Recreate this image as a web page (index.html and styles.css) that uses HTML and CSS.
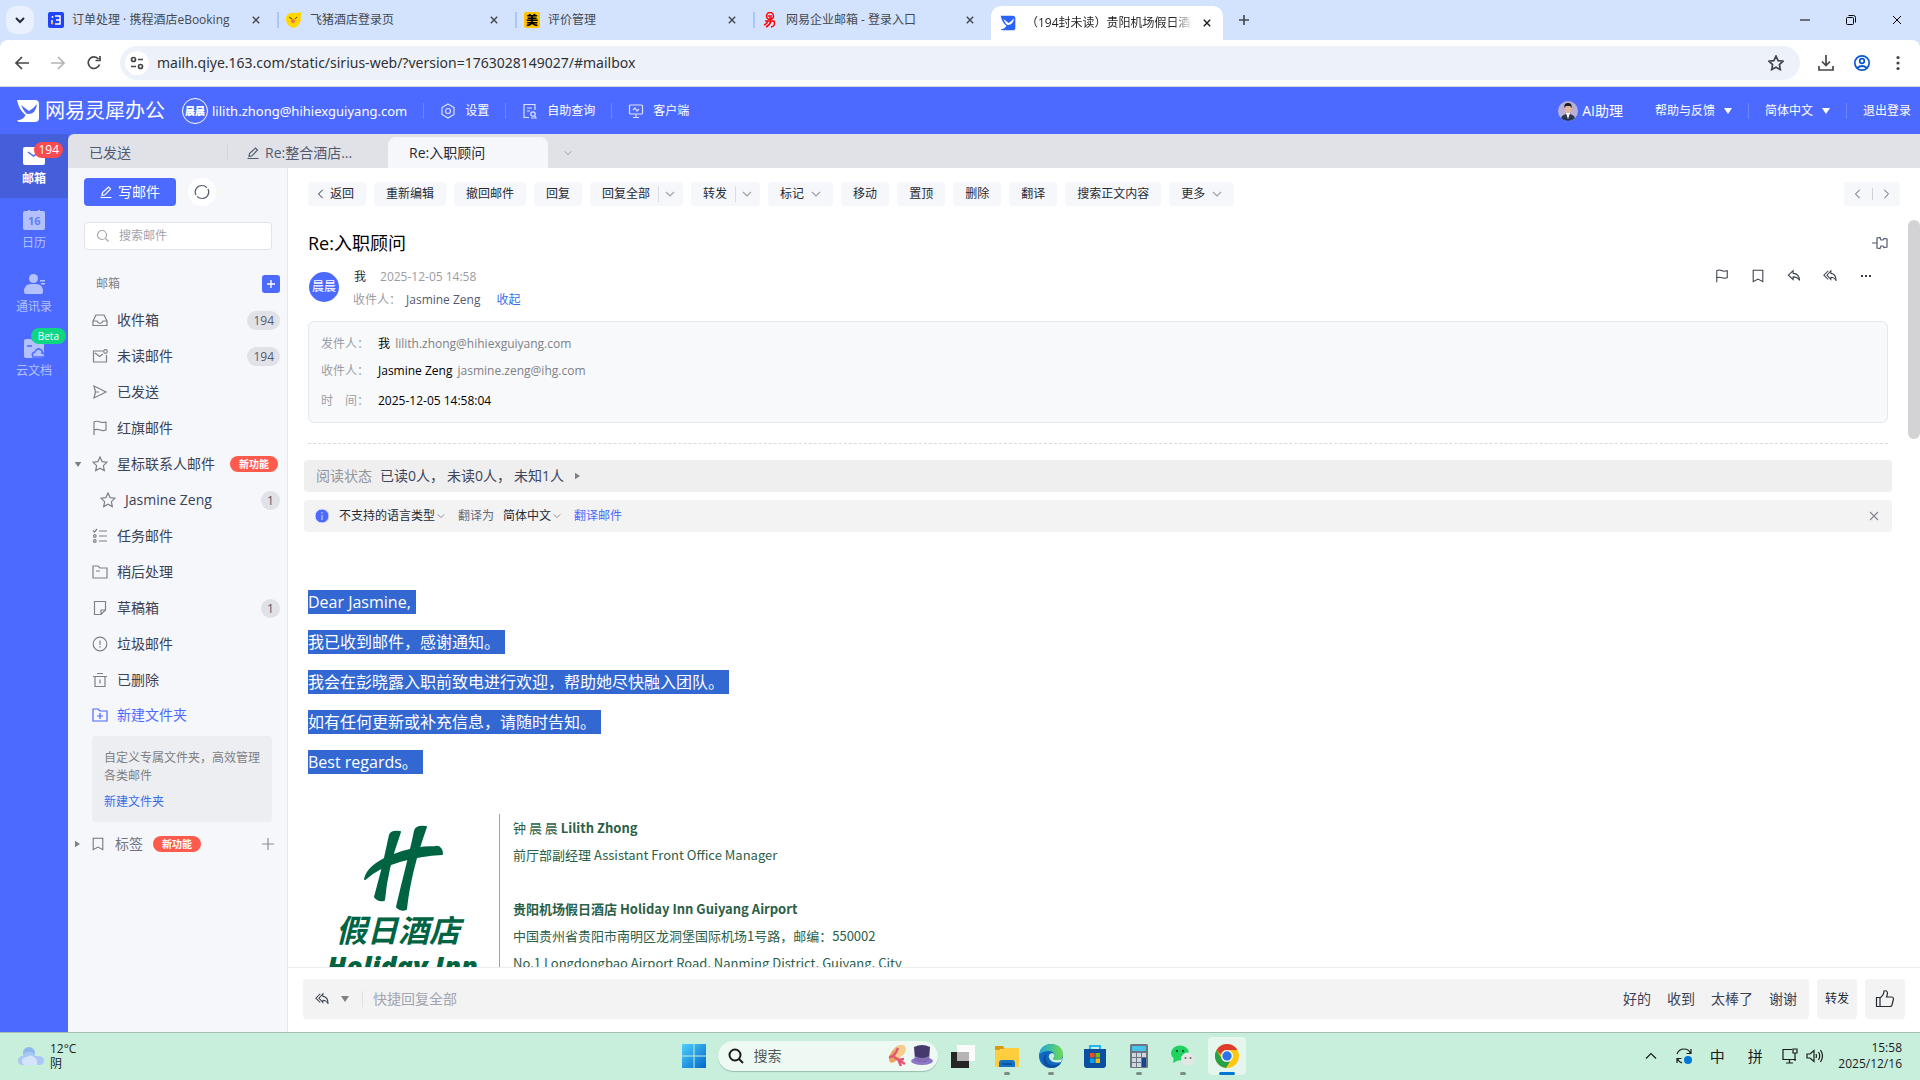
FILE: index.html
```html
<!DOCTYPE html>
<html lang="zh-CN">
<head>
  <meta charset="utf-8">
  <meta name="viewport" content="width=device-width">
  <title>(194封未读) 贵阳机场假日酒店</title>
  <link rel="stylesheet" href="styles.css">
</head>
<body>
  <!-- shared icons -->
  <svg class="sprite" aria-hidden="true">
    <symbol id="i-close" viewBox="0 0 10 10"><path d="M1 1l8 8M9 1L1 9"/></symbol>
    <symbol id="i-down" viewBox="0 0 10 10"><path d="M1 3l4 4 4-4"/></symbol>
    <symbol id="i-left" viewBox="0 0 10 12"><path d="M7 1L2 6l5 5"/></symbol>
    <symbol id="i-right" viewBox="0 0 10 12"><path d="M3 1l5 5-5 5"/></symbol>
    <symbol id="i-tri" viewBox="0 0 8 6"><path d="M0 0h8L4 6z"/></symbol>
    <symbol id="i-tri-r" viewBox="0 0 6 8"><path d="M0 0v8l6-4z"/></symbol>
    <symbol id="i-plus" viewBox="0 0 12 12"><path d="M6 0v12M0 6h12"/></symbol>
    <symbol id="i-edit" viewBox="0 0 12 12"><path d="M.5 11.500h11M2 9.500l.5-3L8.500 1l2 2L5 8.800z"/></symbol>
    <symbol id="i-flag" viewBox="0 0 16 16"><path d="M2 15V2c2-1 4-1 6 0s4 .5 6 0v8c-2 .7-4 .7-6 0s-4-.8-6 0"/></symbol>
    <symbol id="i-mark" viewBox="0 0 16 16"><path d="M2.500 1.500h11v13L8 11.500l-5.500 3z"/></symbol>
    <symbol id="i-star" viewBox="0 0 16 16"><path d="M8 1l2.100 4.600 4.900.6-3.600 3.400.9 5L8 12.200 3.700 14.600l.9-5L1 6.200l4.900-.6z"/></symbol>
    <symbol id="i-reply" viewBox="0 0 16 16"><path d="M7 2L1.500 7 7 12V9c3 0 5.500 1 7.500 4C14 8 11 5.200 7 5z"/></symbol>
    <symbol id="i-reply-all" viewBox="0 0 16 16"><path d="M9 2L4.500 7 9 12V9.500c3 0 4.500 1 6 4C15 8 12 5.300 9 5zM6 2L1 7l5 5"/></symbol>
    <symbol id="i-logo" viewBox="0 0 24 24"><path d="M1 1h18q4 0 4 4v14q0 4-4 4H4q-2 0-3-1.500 7-1 8.500-5.500Q3 11 1 1z"/><path class="cut" d="M5 6q4 3 8 6 5-3 8-7-1 10-9 10-3 0-7-9z"/></symbol>
  </svg>

  <header class="browser">
    <div class="tabstrip">
      <button class="tab-search" aria-label="搜索标签页"><svg class="ico s10 bold"><use href="#i-down"/></svg></button>
      <div class="tab">
        <svg class="fav" viewBox="0 0 16 16"><rect width="16" height="16" rx="2" fill="#2043ff"/><path d="M7 4h5v8H7M8 8h4M4 8v4" stroke="#fff" stroke-width="1.500" fill="none"/><circle cx="4.500" cy="5" r="1" fill="#fff"/><circle cx="4.500" cy="11.500" r="1" fill="#ff9d00"/></svg>
        <span>订单处理 · 携程酒店eBooking</span>
        <button aria-label="关闭"><svg class="ico s8"><use href="#i-close"/></svg></button>
      </div>
      <div class="tab">
        <svg class="fav" viewBox="0 0 16 16"><path d="M0 5Q3 0 8 1q3 0 8-1-2 3-1 8-2 7-8 8Q-1 13 0 5z" fill="#ffd800"/><path d="M3 5l3 2M11 5l-2 2" stroke="#553300"/><circle cx="7" cy="9" r="2" fill="#f56b63"/></svg>
        <span>飞猪酒店登录页</span>
        <button aria-label="关闭"><svg class="ico s8"><use href="#i-close"/></svg></button>
      </div>
      <div class="tab">
        <svg class="fav" viewBox="0 0 16 16"><rect width="16" height="16" rx="2" fill="#ffc300"/><text x="2" y="12.500" class="fav-text">美</text></svg>
        <span>评价管理</span>
        <button aria-label="关闭"><svg class="ico s8"><use href="#i-close"/></svg></button>
      </div>
      <div class="tab">
        <svg class="fav" viewBox="0 0 16 16"><g fill="none" stroke="#f00" stroke-width="1.500"><circle cx="8" cy="4" r="3.500"/><path d="M6 4h4M7 6h3M3 9h9q2 5-3 6M6 9q-1 3-4 4M9 9q-1 4-5 6"/></g></svg>
        <span>网易企业邮箱 - 登录入口</span>
        <button aria-label="关闭"><svg class="ico s8"><use href="#i-close"/></svg></button>
      </div>
      <div class="tab on">
        <svg class="fav brand"><use href="#i-logo"/></svg>
        <span>（194封未读）贵阳机场假日酒店</span>
        <button aria-label="关闭"><svg class="ico s8"><use href="#i-close"/></svg></button>
      </div>
      <button class="new-tab" aria-label="新标签页"><svg class="ico s10"><use href="#i-plus"/></svg></button>
      <div class="win">
        <button aria-label="最小化"><svg class="ico s10 thin" viewBox="0 0 10 10"><path d="M0 5h10"/></svg></button>
        <button aria-label="还原"><svg class="ico s10 thin" viewBox="0 0 10 10"><rect x=".5" y="2.500" width="7" height="7" rx="1"/><path d="M2.500.5h5q2 0 2 2v5"/></svg></button>
        <button aria-label="关闭窗口"><svg class="ico s10 thin"><use href="#i-close"/></svg></button>
      </div>
    </div>
    <div class="addressbar">
      <button aria-label="后退"><svg class="ico s16 nav" viewBox="0 0 16 16"><path d="M15 8H2M8 2L2 8l6 6"/></svg></button>
      <button aria-label="前进" disabled><svg class="ico s16 nav" viewBox="0 0 16 16"><path d="M1 8h13M8 2l6 6-6 6"/></svg></button>
      <button aria-label="重新加载"><svg class="ico s16 nav" viewBox="0 0 16 16"><path d="M13.500 9.500A5.800 5.800 0 1 1 12.500 4M14 1v4.500H9.500"/></svg></button>
      <div class="omnibox">
        <span class="site"><svg class="ico s14 nav" viewBox="0 0 14 14"><circle cx="3.500" cy="3.500" r="2"/><path d="M8 3.500h5M1 10.500h5"/><circle cx="10.500" cy="10.500" r="2"/></svg></span>
        <input type="text" aria-label="地址" value="mailh.qiye.163.com/static/sirius-web/?version=1763028149027/#mailbox">
        <button aria-label="收藏"><svg class="ico s16 nav"><use href="#i-star"/></svg></button>
      </div>
      <button aria-label="下载"><svg class="ico s16 nav" viewBox="0 0 16 16"><path d="M8 0v10M4 6.500l4 4 4-4M1 11v4h14v-4"/></svg></button>
      <button aria-label="个人资料"><svg class="ico s16 nav profile" viewBox="0 0 16 16"><circle cx="8" cy="8" r="7.200"/><circle cx="8" cy="6" r="2.300"/><path d="M3 13q5-4 10 0"/></svg></button>
      <button aria-label="菜单"><svg class="ico s16 dots" viewBox="0 0 16 16"><circle cx="8" cy="2.500" r="1.600"/><circle cx="8" cy="8" r="1.600"/><circle cx="8" cy="13.500" r="1.600"/></svg></button>
    </div>
  </header>

  <div class="topbar">
    <a class="logo" href="#"><svg class="logo-mark"><use href="#i-logo"/></svg><span>网易灵犀办公</span></a>
    <a class="account" href="#"><span class="account-pic">晨晨</span>lilith.zhong@hihiexguiyang.com</a>
    <a class="top-item" href="#"><svg class="ico s16" viewBox="0 0 16 16"><path d="M8 1l6 3.500v7L8 15l-6-3.500v-7z"/><circle cx="8" cy="8" r="2.500"/></svg>设置</a>
    <a class="top-item" href="#"><svg class="ico s16" viewBox="0 0 16 16"><path d="M13 7V1.500H2v13h5M5 5h5M5 8h3"/><circle cx="11" cy="11" r="2.200"/><path d="M9 15h5l-1-2"/></svg>自助查询</a>
    <a class="top-item" href="#"><svg class="ico s16" viewBox="0 0 16 16"><rect x="1.500" y="2" width="13" height="9" rx="1"/><path d="M5 14.500h6M8 11v3M5 7l2-2 2 3 2-2"/></svg>客户端</a>
    <div class="top-right">
      <a class="ai" href="#"><svg class="ai-pic" viewBox="0 0 20 20"><circle cx="10" cy="10" r="10" fill="#b9aed4"/><path d="M3 17q1-3 5-4h4q4 1 5 4-3 3-7 3t-7-3z" fill="#2c3850"/><path d="M8 12h4l-2 6z" fill="#fff"/><ellipse cx="10" cy="8" rx="3.200" ry="4.200" fill="#e3b79d"/><path d="M6.500 7q-1-5 3.500-5t3.500 5L12 5H8z" fill="#1d1d24"/></svg>AI助理</a>
      <button class="top-item">帮助与反馈<svg class="tri"><use href="#i-tri"/></svg></button>
      <button class="top-item">简体中文<svg class="tri"><use href="#i-tri"/></svg></button>
      <a class="top-item last" href="#">退出登录</a>
    </div>
  </div>

  <div class="app">
    <nav class="rail">
      <a class="rail-item on" href="#">
        <svg class="rail-ico" viewBox="0 0 22 20"><rect y="1" width="22" height="18" rx="2"/><path class="hole" d="M5 6l5.500 4L16 6"/></svg>邮箱<b class="badge">194</b>
      </a>
      <a class="rail-item" href="#">
        <svg class="rail-ico" viewBox="0 0 22 20"><path d="M0 3q0-2 2-2h3V0h2v1h8V0h2v1h3q2 0 2 2v15q0 2-2 2H2q-2 0-2-2z"/><text x="5" y="15">16</text></svg>日历
      </a>
      <a class="rail-item" href="#">
        <svg class="rail-ico" viewBox="0 0 22 20"><circle cx="10.500" cy="4.500" r="4.500"/><path d="M1 18q0-8 7-8h5q7 0 7 8 0 2-2 2H3q-2 0-2-2zM17 6h5v1.500h-5zM18 9h4v1.500h-4z"/></svg>通讯录
      </a>
      <a class="rail-item" href="#">
        <svg class="rail-ico" viewBox="0 0 22 20"><path d="M1 3q0-2 2-2h5l2 2h9q2 0 2 2v13q0 2-2 2H3q-2 0-2-2z"/><path class="hole" d="M4 8h5M10 19q-2-4 2-5 2-5 6-2 2 1 1 3 3 0 3 4z"/></svg>云文档<b class="badge beta">Beta</b>
      </a>
    </nav>

    <div class="workspace">
      <div class="mailtabs">
        <a class="mailtab sep" href="#">已发送</a>
        <a class="mailtab" href="#"><svg class="ico s12"><use href="#i-edit"/></svg>Re:整合酒店...</a>
        <a class="mailtab on" href="#">Re:入职顾问</a>
        <button class="mailtab-more" aria-label="更多标签"><svg class="ico s8"><use href="#i-down"/></svg></button>
      </div>

      <div class="panes">
        <aside class="folders">
          <div class="compose-row">
            <button class="compose"><svg class="ico s12"><use href="#i-edit"/></svg>写邮件</button>
            <button class="refresh" aria-label="刷新"><svg class="ico s16" viewBox="0 0 16 16"><path d="M2 11A6.500 6.500 0 0 1 8 1.500q3 0 5 2.200M14 5A6.500 6.500 0 0 1 8 14.500q-3 0-5-2.200"/></svg></button>
          </div>
          <label class="search">
            <svg class="ico s12" viewBox="0 0 12 12"><circle cx="5" cy="5" r="4.500"/><path d="M8.500 8.500l3 3"/></svg>
            <input type="text" placeholder="搜索邮件" aria-label="搜索邮件">
          </label>
          <div class="folder-head"><span>邮箱</span><button aria-label="添加"><svg class="ico s8"><use href="#i-plus"/></svg></button></div>
          <ul class="folder-list">
            <li><a href="#"><svg class="ico s16" viewBox="0 0 16 16"><path d="M1 9l3-6h8l3 6v4.500H1zM1 9h4q1 2.500 3 2.500T11 9h4"/></svg>收件箱<i class="count">194</i></a></li>
            <li><a href="#"><svg class="ico s16" viewBox="0 0 16 16"><path d="M11 3H1.500v11h13V7M3 5l4.500 3.500L11 6"/><circle cx="13.500" cy="3.500" r="1.800"/></svg>未读邮件<i class="count">194</i></a></li>
            <li><a href="#"><svg class="ico s16" viewBox="0 0 16 16"><path d="M2 2l12 6-12 6 1.500-6zM3.500 8H7"/></svg>已发送</a></li>
            <li><a href="#"><svg class="ico s16"><use href="#i-flag"/></svg>红旗邮件</a></li>
            <li><a href="#"><svg class="fold"><use href="#i-tri"/></svg><svg class="ico s16"><use href="#i-star"/></svg>星标联系人邮件<i class="new">新功能</i></a></li>
            <li class="sub"><a href="#"><svg class="ico s16"><use href="#i-star"/></svg>Jasmine Zeng<i class="count">1</i></a></li>
            <li><a href="#"><svg class="ico s16" viewBox="0 0 16 16"><path d="M7 3h8M7 8h8M7 13h8M1 2.500L2.500 4 5 1"/><circle cx="2.800" cy="8" r="1.300"/><circle cx="2.800" cy="13" r="1.300"/></svg>任务邮件</a></li>
            <li><a href="#"><svg class="ico s16" viewBox="0 0 16 16"><path d="M1 2h5l2 2h7v10H1zM4 7h4"/></svg>稍后处理</a></li>
            <li><a href="#"><svg class="ico s16" viewBox="0 0 16 16"><path d="M9 14.500H2.500v-13h11V10zM9 14.500V10h4.500"/></svg>草稿箱<i class="count">1</i></a></li>
            <li><a href="#"><svg class="ico s16" viewBox="0 0 16 16"><circle cx="8" cy="8" r="6.800"/><path d="M8 4.500v4.500M8 10v1.500"/></svg>垃圾邮件</a></li>
            <li><a href="#"><svg class="ico s16" viewBox="0 0 16 16"><path d="M5 1.500h6M1 4.500h14M3 4.500v10h10v-10M8 7.500v4"/></svg>已删除</a></li>
            <li class="create"><a href="#"><svg class="ico s16" viewBox="0 0 16 16"><path d="M1 2h5l2 2h7v10H1zM8 6v6M5 9h6"/></svg>新建文件夹</a></li>
          </ul>
          <div class="folder-tip">
            <p>自定义专属文件夹，高效管理各类邮件</p>
            <a href="#">新建文件夹</a>
          </div>
          <div class="tags">
            <svg class="fold right"><use href="#i-tri-r"/></svg>
            <svg class="ico s14"><use href="#i-mark"/></svg>
            <span>标签</span><i class="new">新功能</i>
            <button aria-label="新建标签"><svg class="ico s12"><use href="#i-plus"/></svg></button>
          </div>
        </aside>

        <main class="reader">
          <div class="toolbar">
            <button><svg class="ico s10 back"><use href="#i-left"/></svg>返回</button>
            <button>重新编辑</button>
            <button>撤回邮件</button>
            <button>回复</button>
            <span class="split"><button>回复全部</button><button aria-label="回复全部选项"><svg class="ico s10"><use href="#i-down"/></svg></button></span>
            <span class="split"><button>转发</button><button aria-label="转发选项"><svg class="ico s10"><use href="#i-down"/></svg></button></span>
            <button>标记<svg class="ico s10"><use href="#i-down"/></svg></button>
            <button>移动</button>
            <button>置顶</button>
            <button>删除</button>
            <button>翻译</button>
            <button>搜索正文内容</button>
            <button>更多<svg class="ico s10"><use href="#i-down"/></svg></button>
            <span class="pager"><button aria-label="上一封"><svg class="ico s10"><use href="#i-left"/></svg></button><button aria-label="下一封"><svg class="ico s10"><use href="#i-right"/></svg></button></span>
          </div>

          <div class="scroller">
            <article class="mail">
              <div class="subject">
                <h1>Re:入职顾问</h1>
                <button aria-label="固定"><svg class="ico s16" viewBox="0 0 16 16"><path d="M0 8h5M5 3v10l3 .5 1-2.500h2l1 1.500 3-.5V4l-3-.5L11 5H9L8 2.500z"/></svg></button>
              </div>
              <div class="meta">
                <span class="avatar">晨晨</span>
                <div class="who">
                  <div><b>我</b><time>2025-12-05 14:58</time></div>
                  <div><span>收件人：</span><em>Jasmine Zeng</em><a href="#">收起</a></div>
                </div>
                <div class="actions">
                  <button aria-label="红旗"><svg class="ico s14"><use href="#i-flag"/></svg></button>
                  <button aria-label="标签"><svg class="ico s14"><use href="#i-mark"/></svg></button>
                  <button aria-label="回复"><svg class="ico s14"><use href="#i-reply"/></svg></button>
                  <button aria-label="回复全部"><svg class="ico s14"><use href="#i-reply-all"/></svg></button>
                  <button aria-label="更多"><svg class="ico s14 dots" viewBox="0 0 14 14"><path d="M2 6h2v2H2zM6 6h2v2H6zM10 6h2v2h-2z"/></svg></button>
                </div>
              </div>
              <dl class="detail">
                <div><dt>发件人：</dt><dd>我 <span>lilith.zhong@hihiexguiyang.com</span></dd></div>
                <div><dt>收件人：</dt><dd>Jasmine Zeng <span>jasmine.zeng@ihg.com</span></dd></div>
                <div class="time"><dt>时　间：</dt><dd>2025-12-05 14:58:04</dd></div>
              </dl>
              <hr>
              <div class="status"><span>阅读状态</span><b>已读0人，</b><b>未读0人，</b><b>未知1人</b><svg class="fold right"><use href="#i-tri-r"/></svg></div>
              <div class="translate">
                <svg class="info" viewBox="0 0 14 14"><circle cx="7" cy="7" r="7"/><path d="M7 3v1.500M7 6v5"/></svg>
                <select class="from" aria-label="原文语言"><option>不支持的语言类型</option></select><svg class="ico s8"><use href="#i-down"/></svg>
                <span>翻译为</span>
                <select class="to" aria-label="目标语言"><option>简体中文</option></select><svg class="ico s8"><use href="#i-down"/></svg>
                <a href="#">翻译邮件</a>
                <button aria-label="关闭"><svg class="ico s10"><use href="#i-close"/></svg></button>
              </div>
              <div class="letter">
                <p><mark>Dear Jasmine,</mark></p>
                <p><mark>我已收到邮件，感谢通知。</mark></p>
                <p><mark>我会在彭晓露入职前致电进行欢迎，帮助她尽快融入团队。</mark></p>
                <p><mark>如有任何更新或补充信息，请随时告知。</mark></p>
                <p><mark>Best regards。</mark></p>
              </div>
              <div class="signature">
                <svg class="hotel" viewBox="0 0 191 190" role="img" aria-label="Holiday Inn">
                  <g class="hotel-h">
                    <path d="M92 18C86 17 83 18 82 21Q76 52 67 83q3 4 9 3C78 62 84 40 92 18z"/>
                    <path d="M118 13c-7-1-10 0-11 4-5 25-13 53-18 76q4 4 9 2c3-29 11-57 20-82z"/>
                    <path d="M57 65c4-19 43-32 70-32 5-1 7 3 7 7-25 1-60 9-77 25z"/>
                  </g>
                  <text x="28" y="128" class="hotel-cn">假日酒店</text>
                  <text x="19" y="162" class="hotel-en">Holiday Inn</text>
                </svg>
                <div class="sign-text">
                  <p>钟 晨 晨 <b>Lilith Zhong</b></p>
                  <p>前厅部副经理 Assistant Front Office Manager</p>
                  <p>&nbsp;</p>
                  <p><b>贵阳机场假日酒店 Holiday Inn Guiyang Airport</b></p>
                  <p>中国贵州省贵阳市南明区龙洞堡国际机场1号路，邮编：550002</p>
                  <p>No.1 Longdongbao Airport Road, Nanming District, Guiyang, City</p>
                </div>
              </div>
            </article>
            <div class="scrollbar"></div>
          </div>

          <div class="quick">
            <div class="quick-box">
              <button aria-label="回复全部"><svg class="ico s14"><use href="#i-reply-all"/></svg></button>
              <button class="quick-mode" aria-label="切换"><svg class="tri"><use href="#i-tri"/></svg></button>
              <input type="text" placeholder="快捷回复全部" aria-label="快捷回复全部">
              <button class="phrase">好的</button>
              <button class="phrase">收到</button>
              <button class="phrase">太棒了</button>
              <button class="phrase">谢谢</button>
            </div>
            <button class="quick-btn">转发</button>
            <button class="quick-btn" aria-label="点赞"><svg class="ico s20" viewBox="0 0 20 20"><path d="M1.500 8.500h3.500v9H1.500zM5 9q4-3 4-7 3-1 3.500 2 0 2-1 4H17q1.500 0 1.500 2L17 16q-.5 1.500-2 1.500H5"/></svg></button>
          </div>
        </main>
      </div>
    </div>
  </div>

  <footer class="taskbar">
    <button class="weather">
      <svg viewBox="0 0 26 18"><circle cx="11" cy="6" r="6" fill="#8eb7ee"/><path d="M5 18q-5 0-5-4.500T5 9q2-5 7-4 4 0 5 4h3q6 0 6 4.500T20 18z" fill="#a9c8f5"/><path d="M7 18q-4-1-3-5 1-3 5-3 3-3 7 0 4 2 3 8z" fill="#d5e4fb"/></svg>
      <span>12°C<br>阴</span>
    </button>
    <div class="dock">
      <button aria-label="开始"><svg viewBox="0 0 24 24"><defs><linearGradient id="g-win" x2="1" y2="1"><stop stop-color="#4fd0ff"/><stop offset="1" stop-color="#0067c8"/></linearGradient></defs><path fill="url(#g-win)" d="M0 0h11.500v11.500H0zM12.500 0H24v11.500H12.500zM0 12.500h11.500V24H0zM12.500 12.500H24V24H12.500z"/></svg></button>
      <label class="os-search">
        <svg class="ico s16" viewBox="0 0 16 16"><circle cx="7" cy="7" r="5.500"/><path d="M11 11l4 4"/></svg>
        <input type="text" placeholder="搜索" aria-label="搜索">
        <svg class="hats" viewBox="0 0 48 24"><ellipse cx="10" cy="10" rx="5" ry="10" transform="rotate(35 10 10)" fill="#e8aa62"/><ellipse cx="14" cy="7" rx="5" ry="7" transform="rotate(40 14 7)" fill="#f7cd8b"/><path d="M3 13q5 1 9-9M8 13l11 7M12 16l6-1M12 15l3 7" stroke="#e4566f" stroke-width="2.500" fill="none"/><ellipse cx="36" cy="17" rx="11" ry="4" fill="#8d78c6"/><path d="M28 3q8-4 16 0l-1 13q-7 4-14 0z" fill="#46396b"/><path d="M29 12q7 4 14 0v4q-7 4-14 0z" fill="#8470b8"/></svg>
      </label>
      <button aria-label="任务视图"><svg viewBox="0 0 24 24"><path d="M6 1h18v16H6z" fill="#fafafa"/><path d="M0 8h18v16H0z" fill="#262626"/><path d="M6 8h12v9H6z" fill="#b5b5b5"/></svg></button>
      <button class="open" aria-label="文件资源管理器"><svg viewBox="0 0 24 24"><path d="M0 2h8l2 3h-4l-6 3z" fill="#d89b0c"/><path d="M0 6h6l4-2h14v19H0z" fill="#ffce3f"/><path d="M4 23v-4q0-3 3-3h10q3 0 3 3v4z" fill="#1473c4"/><path d="M7 19h10v2H7z" fill="#0c559c"/></svg></button>
      <button class="open" aria-label="Edge"><svg viewBox="0 0 24 24"><defs><linearGradient id="g-edge"><stop stop-color="#1fa6e0"/><stop offset="1" stop-color="#6ddc4c"/></linearGradient></defs><circle cx="12" cy="12" r="12" fill="#1069c0"/><path d="M0 11Q2 0 12 0q11 0 12 10 0 6-6 6-4 0-4-2 2-1 1-4-1-3-5-3-7 0-10 4z" fill="url(#g-edge)"/><path d="M9 9q-4 3-1 9 4 6 14 1-3 5-10 5-7-1-8-8 0-5 5-7z" fill="#0d4f9e"/><path d="M13 9q-4 1-3 5 3 6 12 4l2-4q-2 2-6 2-4 0-4-2 2-1 1-4z" fill="#c8eedc"/></svg></button>
      <button aria-label="应用商店"><svg viewBox="0 0 24 24"><path d="M7 6V2h10v4" fill="none" stroke="#22b5f3" stroke-width="2"/><path d="M1 5h22v16q0 3-3 3H4q-3 0-3-3z" fill="#0b4fa0"/><path d="M7 9h4.500v4.500H7z" fill="#f25022"/><path d="M12.500 9H17v4.500h-4.500z" fill="#7fba00"/><path d="M7 14.500h4.500V19H7z" fill="#00a4ef"/><path d="M12.500 14.500H17V19h-4.500z" fill="#ffb900"/></svg></button>
      <button class="open" aria-label="计算器"><svg viewBox="0 0 24 24"><rect x="3" width="18" height="24" rx="1.500" fill="#6c7581"/><path d="M5 2h14v5H5z" fill="#45c4ec"/><path d="M5 9h4v4H5zM10 9h4v4h-4zM15 9h4v4h-4zM5 14h4v4H5zM10 14h4v4h-4zM5 19h4v4H5zM10 19h4v4h-4z" fill="#cfd7df"/><path d="M15 14h4v9h-4z" fill="#14478e"/></svg></button>
      <button class="open" aria-label="微信"><svg viewBox="0 0 24 24"><ellipse cx="9" cy="9" rx="9" ry="7.500" fill="#1ed35f"/><path d="M3 13l-1 6 6-3z" fill="#1ed35f"/><circle cx="6" cy="7" r="1.200" fill="#12672f"/><circle cx="12" cy="7" r="1.200" fill="#12672f"/><ellipse cx="17" cy="15" rx="7" ry="6.500" fill="#e4e7e6"/><circle cx="14.500" cy="14" r="1" fill="#666"/><circle cx="19.500" cy="14" r="1" fill="#666"/></svg></button>
      <button class="open active" aria-label="Chrome"><svg viewBox="0 0 24 24"><circle cx="12" cy="12" r="12" fill="#fdc80f"/><path d="M1.600 6A12 12 0 0 1 22.400 6H12q-5 0-6 5z" fill="#e23a2e"/><path d="M1.600 6A12 12 0 0 0 11 24l5.500-9q-4 5-9 1z" fill="#26a147"/><circle cx="12" cy="12" r="6" fill="#fff"/><circle cx="12" cy="12" r="4.700" fill="#2c75e8"/></svg></button>
    </div>
    <div class="tray">
      <button aria-label="显示隐藏的图标"><svg class="ico s10" viewBox="0 0 10 10"><path d="M0 7.500L5 2.500l5 5"/></svg></button>
      <button aria-label="更新"><svg class="ico s16" viewBox="0 0 16 16"><path d="M1 6Q3 1 8 1t6.500 4.500M15 1v4.500h-4.500M6 15q-3-1-4.500-4M1 15v-4.500h4.500"/><circle class="dot" cx="12" cy="12" r="4"/></svg></button>
      <button>中</button>
      <button>拼</button>
      <button class="net" aria-label="网络和声音">
        <svg class="ico s16" viewBox="0 0 16 16"><path d="M10 1.500H1v10h13M4 15h7M7.500 11.500V15M11 1h4v4h-4zM13 5v8"/></svg>
        <svg class="ico s16" viewBox="0 0 16 16"><path d="M0 6h3l4-3.500v11L3 10H0zM9 6q1 2 0 4M11.500 4q2.500 4 0 8M13.500 2q4 6 0 12"/></svg>
      </button>
      <time>15:58<br>2025/12/16</time>
    </div>
  </footer>
</body>
</html>
```
FILE: styles.css
```css
* {
  margin: 0;
  padding: 0;
  box-sizing: border-box;
}

html, body {
  height: 100%;
}

body {
  display: flex;
  flex-direction: column;
  overflow: hidden;
  background: #fff;
  color: #262a33;
  font-family: 'Open Sans', 'Noto Sans CJK SC', sans-serif;
  font-size: 12px;
  line-height: 18px;
}

button, input, select {
  font: inherit;
  color: inherit;
  border: 0;
  background: none;
  outline: none;
}

button {
  display: flex;
  align-items: center;
  justify-content: center;
  white-space: nowrap;
}

a { color: inherit; text-decoration: none; white-space: nowrap; }
i, em { font-style: normal; }
ul { list-style: none; }
input { min-width: 0; }
svg { flex: none; }

.sprite { position: absolute; width: 0; height: 0; }
.ico { fill: none; stroke: currentColor; stroke-width: 1.2; overflow: visible; }
.s8 { width: 8px; height: 8px; }
.s10 { width: 10px; height: 10px; }
.s12 { width: 12px; height: 12px; }
.s14 { width: 14px; height: 14px; }
.s16 { width: 16px; height: 16px; }
.s20 { width: 20px; height: 20px; }
.nav { stroke-width: 1.7; }
.bold { stroke-width: 2; }
.thin { stroke-width: 1; }
.dots { fill: currentColor; stroke: none; }
.tri { width: 8px; height: 6px; fill: currentColor; }
.fold { width: 8px; height: 5px; fill: #7d8085; }
.fold.right { width: 5px; height: 8px; }
.cut { fill: var(--cut, #fff); }

/* browser chrome */
.browser { flex: none; background: #d3e2fd; }

.tabstrip {
  display: flex;
  align-items: center;
  height: 40px;
  padding-left: 6px;
}

.tab-search {
  width: 28px;
  height: 28px;
  margin-right: 5px;
  border-radius: 10px;
  background: #eaf1fe;
}

.tab {
  display: flex;
  align-items: center;
  width: 238px;
  height: 40px;
  padding: 0 13px 0 9px;
  color: #45494f;
}

.tab + .tab:not(.on) {
  background: linear-gradient(#a8c7fa, #a8c7fa) left center / 2px 16px no-repeat;
}

.fav { width: 16px; height: 16px; margin-right: 8px; }
.fav-text { font-size: 12px; font-weight: 900; }
.brand { fill: #2b63f6; }

.tab span {
  flex: 1;
  overflow: hidden;
  white-space: nowrap;
}

.tab button { width: 16px; height: 16px; margin-left: 6px; }
.tab .ico { stroke-width: 1.8; }

.tab.on {
  width: 232px;
  height: 34px;
  margin-top: 6px;
  padding: 0 8px 0 9px;
  border-radius: 10px 10px 0 0;
  background: #fff;
  color: #1f1f1f;
}

.tab.on .fav { margin-right: 10px; }

.tab.on span {
  -webkit-mask-image: linear-gradient(90deg, #000 88%, transparent);
  mask-image: linear-gradient(90deg, #000 88%, transparent);
}

.new-tab { width: 28px; height: 28px; margin-left: 7px; }
.new-tab .ico { stroke-width: 2; color: #45494f; }
.win { display: flex; margin-left: auto; }
.win button { width: 46px; height: 40px; color: #000; }

.addressbar {
  display: flex;
  align-items: center;
  height: 47px;
  padding: 0 4px;
  border-bottom: 1px solid #d6d9de;
  border-radius: 8px 8px 0 0;
  background: #fff;
  color: #45474a;
}

.addressbar > button { width: 36px; height: 36px; }
.addressbar > button:disabled { color: #b2b4b6; }
.addressbar .profile { color: #0b57d0; }
.omnibox + button { margin-left: 8px; }

.omnibox {
  display: flex;
  flex: 1;
  align-items: center;
  height: 34px;
  margin-left: 8px;
  padding: 0 16px 0 5px;
  border-radius: 17px;
  background: #ecf1fa;
}

.site {
  display: grid;
  place-items: center;
  width: 24px;
  height: 24px;
  margin-right: 8px;
  border-radius: 50%;
  background: #fff;
}

.omnibox input { flex: 1; font-family: 'Noto Sans', sans-serif; font-size: 14px; color: #303134; }

/* product header */
.topbar {
  --cut: #4c6aff;
  display: flex;
  flex: none;
  align-items: center;
  height: 47px;
  padding: 0 9px 0 16px;
  background: #4c6aff;
  color: #fff;
}

.logo { display: flex; align-items: center; font-size: 20px; }
.logo-mark { width: 24px; height: 24px; margin-right: 5px; fill: #fff; }

.account {
  display: flex;
  align-items: center;
  margin: 0 16px 0 17px;
  font-family: 'Noto Sans', 'Noto Sans CJK SC', sans-serif;
  font-size: 13px;
}

.account-pic {
  display: grid;
  place-items: center;
  width: 26px;
  height: 26px;
  margin-right: 4px;
  border: 1px solid #fff;
  border-radius: 50%;
  font-size: 10px;
  font-weight: 900;
}

.top-item {
  display: flex;
  align-items: center;
  height: 16px;
  padding: 0 16px;
  border-left: 1px solid #6d86ff;
}

.top-item .ico { margin-right: 9px; opacity: .8; }
.top-item .tri { margin-left: 9px; }
.top-right { display: flex; align-items: center; margin-left: auto; }
.top-right > button:first-of-type { border-left: 0; }
.top-item.last { padding-right: 0; }
.ai { display: flex; align-items: center; margin-right: 16px; font-size: 14px; }
.ai-pic { width: 20px; height: 20px; margin-right: 4px; }

/* left rail */
.app { display: flex; flex: 1; min-height: 0; background: #4c6aff; }
.rail { flex: none; width: 68px; }

.rail-item {
  position: relative;
  display: flex;
  flex-direction: column;
  align-items: center;
  gap: 4px;
  height: 64px;
  padding-top: 12px;
  color: #b4c1ff;
}

.rail-item.on { background: #455fdb; color: #fff; font-weight: bold; }
.rail-ico { width: 22px; height: 20px; fill: currentColor; }
.rail-ico .hole { fill: none; stroke: #4c6aff; stroke-width: 1.5; }
.rail-ico text { fill: #5f80f5; font-size: 11px; font-weight: bold; }

.badge {
  position: absolute;
  top: 8px;
  right: 5px;
  padding: 0 4px;
  border-radius: 8px;
  background: #fa4b50;
  color: #fff;
  font-size: 12px;
  font-weight: normal;
  line-height: 16px;
}

.badge.beta { top: 2px; right: 2px; padding: 0 7px; background: #0fd683; font-size: 10px; }

/* mail tabs */
.workspace {
  display: flex;
  flex: 1;
  flex-direction: column;
  min-width: 0;
}

.mailtabs {
  display: flex;
  flex: none;
  align-items: flex-end;
  height: 34px;
  border-top-left-radius: 6px;
  background: #e1e2e8;
  color: #545a6e;
  font-size: 14px;
}

.mailtab {
  display: flex;
  align-items: center;
  width: 160px;
  height: 31px;
  padding: 0 16px 0 21px;
}

.mailtab.sep { background: linear-gradient(#d3d5db, #d3d5db) right center / 1px 16px no-repeat; }
.mailtab .ico { margin: 0 6px 0 -2px; }
.mailtab.on { border-radius: 8px 8px 0 0; background: #f6f7fb; color: #262a33; }
.mailtab-more { width: 40px; height: 31px; color: #9698a2; }

.panes { display: flex; flex: 1; min-height: 0; }

/* folder list */
.folders {
  flex: none;
  width: 220px;
  padding: 10px 7px 0 16px;
  border-right: 1px solid #e6e7ec;
  background: #f6f7fb;
  color: #3a4256;
}

.compose-row { display: flex; gap: 12px; margin-bottom: 16px; }

.compose {
  gap: 6px;
  width: 92px;
  height: 28px;
  border-radius: 4px;
  background: #4c6aff;
  color: #fff;
  font-size: 14px;
}

.refresh { width: 28px; height: 28px; border-radius: 50%; background: #fff; color: #545a6e; }

.search {
  display: flex;
  align-items: center;
  gap: 10px;
  height: 28px;
  margin-right: 8px;
  padding: 0 12px;
  border: 1px solid #e1e3e8;
  border-radius: 4px;
  background: #fff;
  color: #a3a5aa;
}

.search input { flex: 1; }
input::placeholder { color: #a3a4ae; opacity: 1; }

.folder-head {
  display: flex;
  align-items: center;
  justify-content: space-between;
  height: 36px;
  margin-top: 16px;
  padding-left: 12px;
  color: #7d8085;
}

.folder-head button { width: 18px; height: 18px; border-radius: 3px; background: #4c6aff; color: #fff; }
.folder-head .ico { stroke-width: 2; }

.folder-list a {
  position: relative;
  display: flex;
  align-items: center;
  height: 36px;
  padding-left: 8px;
  font-size: 14px;
}

.folder-list .ico { margin-right: 9px; color: #7d8085; }
.folder-list .fold { position: absolute; left: -10px; }
.folder-list .sub a { padding-left: 16px; }
.folder-list .create a { height: 34px; color: #4c6aff; }
.folder-list .create .ico { color: #4c6aff; }

.count {
  min-width: 19px;
  margin-left: auto;
  padding: 0 6px;
  border-radius: 10px;
  background: #e1e2e8;
  color: #545a6e;
  font-size: 12px;
  line-height: 19px;
  text-align: center;
}

.new {
  width: 48px;
  border-radius: 8px;
  background: #fe5b4c;
  color: #fff;
  font-size: 10px;
  font-weight: bold;
  line-height: 16px;
  text-align: center;
}

.folder-list .new { margin: 0 2px 0 auto; }

.folder-tip {
  margin: 4px 8px 0;
  padding: 13px 8px 11px 12px;
  border-radius: 4px;
  background: #edeef2;
  color: #7d8085;
}

.folder-tip a { display: block; margin-top: 8px; color: #386ee7; }

.tags {
  position: relative;
  display: flex;
  align-items: center;
  height: 44px;
  padding-left: 7px;
  color: #6f7480;
}

.tags .fold { position: absolute; left: -9px; }
.tags span { margin: 0 10px; font-size: 14px; }
.tags button { margin: 0 6px 0 auto; color: #8d9096; }

/* reader */
.reader {
  display: flex;
  flex: 1;
  flex-direction: column;
  min-width: 0;
  background: #fff;
}

.toolbar {
  display: flex;
  flex: none;
  gap: 8px;
  padding: 14px 20px;
}

.toolbar button {
  gap: 7px;
  height: 24px;
  padding: 0 12px;
  border-radius: 4px;
  background: #f6f7fb;
}

.toolbar .ico { color: #9fa2aa; }
.toolbar .back { margin-left: -4px; margin-right: -3px; color: #262a33; }
.split { display: flex; border-radius: 4px; background: #f6f7fb; }
.toolbar .split button:first-child { padding-right: 8px; }

.toolbar .split button + button {
  padding: 0 8px 0 7px;
  background: linear-gradient(#dcdde2, #dcdde2) left center / 1px 16px no-repeat;
}

.pager { display: flex; margin-left: auto; border-radius: 4px; background: #f6f7fb; }
.toolbar .pager button { padding: 0 9px; }

.toolbar .pager button + button {
  background: linear-gradient(#cfd1d6, #cfd1d6) left center / 1px 12px no-repeat;
}

.pager .ico { color: #545a6e; }

.scroller { display: flex; flex: 1; min-height: 0; overflow: hidden; }
.mail { flex: 1; min-width: 0; padding: 0 20px; }

.scrollbar {
  width: 12px;
  height: 219px;
  border-radius: 6px;
  background: #d3d3d6;
}

.subject {
  display: flex;
  align-items: center;
  justify-content: space-between;
  height: 45px;
}

h1 { color: #000; font-size: 18px; font-weight: normal; }
.subject button { color: #545a6e; }
.meta { display: flex; }

.avatar {
  display: grid;
  place-items: center;
  width: 30px;
  height: 30px;
  margin: 7px 14px 0 1px;
  border-radius: 50%;
  background: #4c6aff;
  color: #fff;
}

.who { flex: 1; color: #9a9da5; line-height: 23px; }
.who div { display: flex; }
.who b { margin: 0 14px 0 1px; color: #262a33; font-weight: normal; }
.who em { margin: 0 16px 0 5px; color: #545a6e; }
.who a { color: #386ee7; }
.actions { display: flex; align-items: flex-start; padding: 3px 14px 0 0; gap: 20px; }
.actions button { width: 16px; height: 16px; color: #3a3f4c; }

.detail {
  margin-top: 10px;
  padding: 8px 12px;
  border: 1px solid #e7e8ee;
  border-radius: 6px;
  background: #f8f9fb;
  line-height: 27px;
}

.detail div { display: flex; }
.detail .time { margin-top: 3px; }
.detail dt { width: 57px; color: #9a9da5; }
.detail dd { color: #000; }
.detail span { margin-left: 2px; color: #7d8085; }

hr { margin: 20px 0 16px; border: 0; border-top: 1px dashed #d8dadd; }

.status, .translate {
  display: flex;
  align-items: center;
  height: 32px;
  margin: 0 -4px 8px;
  padding: 0 12px;
  border-radius: 4px;
  background: #efefef;
}

.status { font-size: 14px; color: #3f465c; }
.status span { margin-right: 8px; color: #94969b; }
.status b { margin-right: 3px; font-weight: normal; }
.status .fold { margin-left: 8px; }
.translate { margin-bottom: 0; padding-left: 11px; background: #f3f3f3; }
.info { width: 14px; height: 14px; margin-right: 10px; fill: #4c6aff; stroke: #dce2ff; }
.translate select { appearance: none; color: #262a33; }
.translate .from { width: 98px; }
.translate .to { width: 50px; }
.translate span { margin: 0 9px 0 13px; color: #666a76; }
.translate a { margin-left: 13px; color: #4c6aff; }
.translate .ico { color: #858997; }
.translate button { margin: 0 1px 0 auto; }

.letter { margin-top: 50px; font-size: 16px; line-height: 40px; }

mark {
  display: inline-block;
  padding-right: 5px;
  background: #3368d2;
  color: #fff;
  line-height: 24px;
}

.signature {
  display: flex;
  margin-top: 32px;
  color: #2b6048;
  font-family: 'Noto Sans CJK SC', sans-serif;
  font-size: 13px;
  line-height: 27px;
}

.hotel { width: 191px; height: 190px; fill: #006341; }
.hotel-h { stroke: #006341; stroke-width: 2; stroke-linejoin: round; }
.hotel-cn { font-size: 31px; font-style: italic; font-weight: bold; }
.hotel-en { font-family: 'Open Sans', sans-serif; font-size: 27px; font-style: italic; font-weight: 800; }
.sign-text { padding-left: 13px; border-left: 1px solid #86b09f; }

.quick {
  display: flex;
  flex: none;
  gap: 8px;
  padding: 11px 15px 13px;
  border-top: 1px solid #ececee;
}

.quick-box {
  display: flex;
  flex: 1;
  align-items: center;
  gap: 16px;
  padding: 0 12px;
  border-radius: 4px;
  background: #f3f3f3;
  color: #3a4256;
  font-size: 14px;
}

.quick-mode { height: 16px; margin-left: -4px; padding-right: 13px; border-right: 1px solid #dfdfe2; color: #7d8085; }
.quick-box input { flex: 1; margin-left: -6px; }
.quick-btn { width: 40px; height: 40px; border-radius: 4px; background: #f3f3f3; }

/* taskbar */
.taskbar {
  display: grid;
  flex: none;
  grid-template-columns: 1fr auto 1fr;
  align-items: center;
  height: 48px;
  padding-bottom: 2px;
  border-top: 1px solid #a5bdb2;
  background: #c8eedc;
  color: #1c1c1c;
}

.weather { justify-self: start; gap: 6px; padding-left: 18px; text-align: left; line-height: 15px; }
.weather svg { width: 26px; height: 18px; }
.dock { display: flex; align-items: center; }
.dock > button { position: relative; width: 38px; height: 38px; margin: 0 3px; border-radius: 4px; }
.dock > button svg { width: 24px; height: 24px; }

.open::after {
  position: absolute;
  bottom: 0;
  width: 6px;
  height: 3px;
  border-radius: 2px;
  background: #7b8f86;
  content: '';
}

.active { background: #e4f6ee; }
.active::after { width: 16px; background: #0078d4; }

.os-search {
  display: flex;
  align-items: center;
  gap: 10px;
  width: 220px;
  height: 30px;
  margin: 0 3px 0 2px;
  padding: 0 4px 0 10px;
  border-radius: 15px;
  background: #eef9f4;
  box-shadow: 0 1px 1px #9bbcad;
}

.os-search input { flex: 1; width: 60px; font-size: 14px; }
.os-search input::placeholder { color: #505a55; }
.os-search .ico { stroke-width: 2; }
.hats { width: 48px; height: 24px; }

.tray { display: flex; align-items: center; justify-self: end; padding-right: 18px; }
.tray button { width: 38px; font-size: 15px; }
.tray button:nth-child(2) { width: 28px; }
.tray .net { gap: 9px; width: 56px; }
.tray .dot { fill: #0078d4; stroke: none; }
.tray time { margin-left: 8px; line-height: 16px; text-align: right; }
```
